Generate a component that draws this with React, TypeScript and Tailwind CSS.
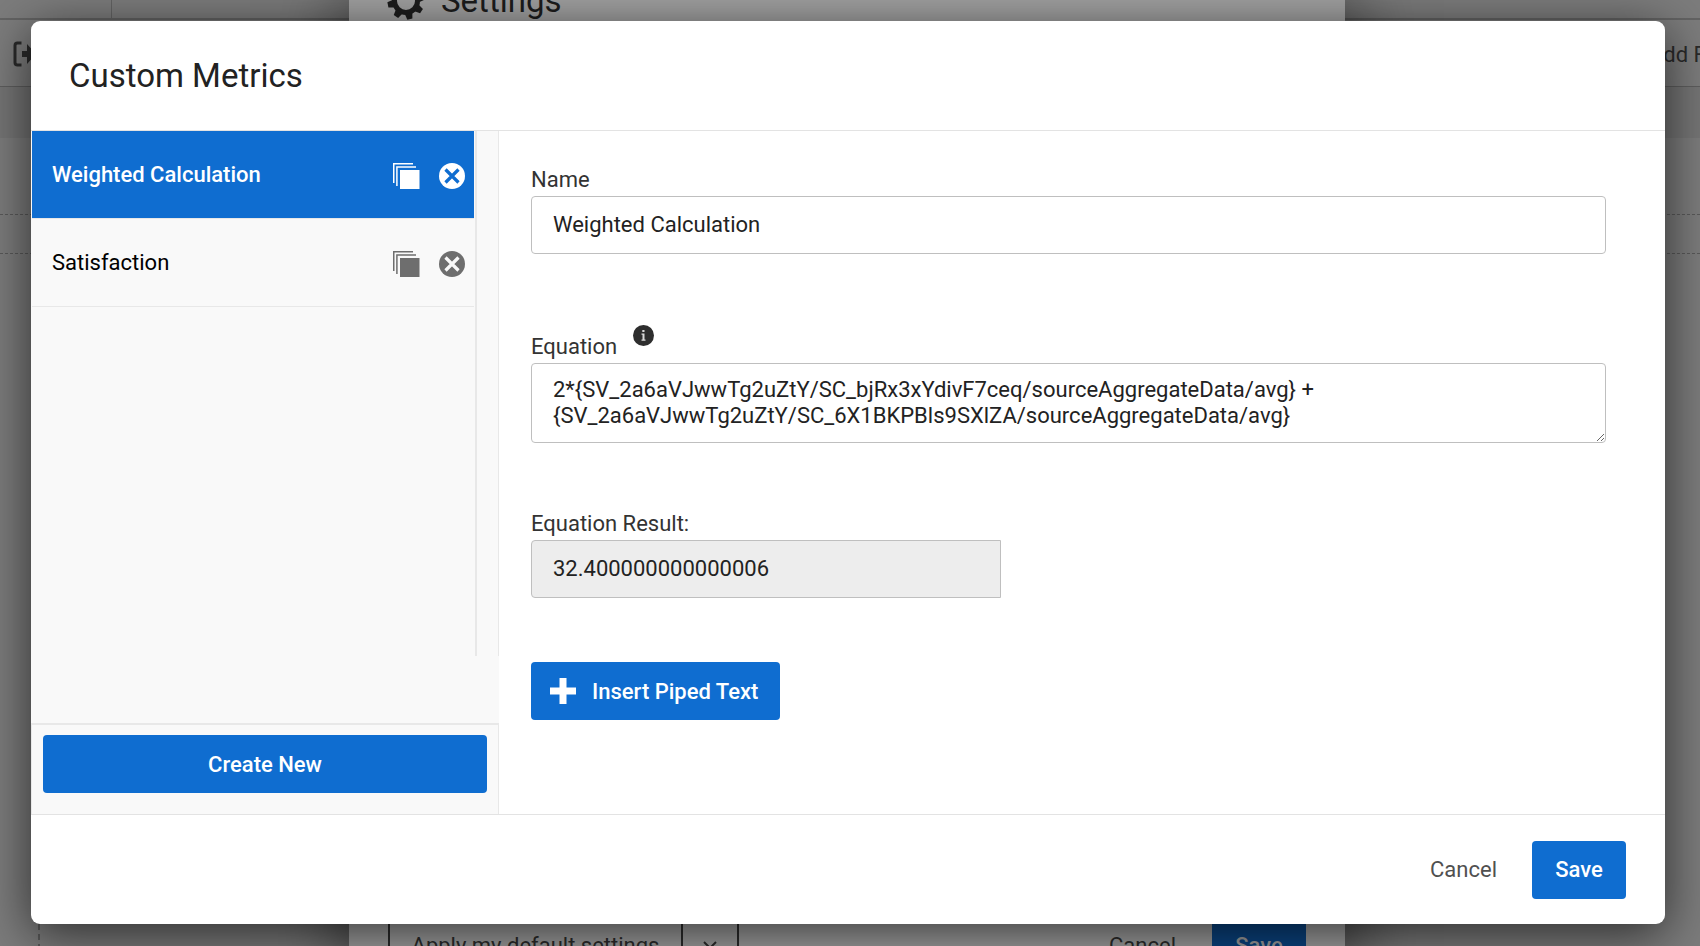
import { useState } from 'react';
import { clsx } from 'clsx';

const METRICS = [
  {
    name: 'Weighted Calculation',
    equation:
      '2*{SV_2a6aVJwwTg2uZtY/SC_bjRx3xYdivF7ceq/sourceAggregateData/avg} +\n{SV_2a6aVJwwTg2uZtY/SC_6X1BKPBls9SXlZA/sourceAggregateData/avg}',
    result: '32.400000000000006'
  },
  {
    name: 'Satisfaction',
    equation: '',
    result: ''
  }
];

const STYLES = {
  primary: 'h-[58px] rounded bg-[#0f6dd0] text-white text-[22px] font-medium',
  label: 'block pb-1 text-[22px] leading-6 text-[#333]',
  field: 'block w-full rounded border border-[#bfbfbf] px-[21px] text-[22px] text-[#222] outline-none'
};

function CopyIcon() {
  return (
    <svg width="27" height="26" viewBox="0 0 27 26" aria-hidden="true">
      <path d="M.75 20V.75H20" fill="none" stroke="currentColor" strokeWidth="1.5" />
      <path d="M3.9 23V3.9H23" fill="none" stroke="currentColor" strokeWidth="1.5" />
      <rect x="7" y="7" width="19.5" height="19" fill="currentColor" />
    </svg>
  );
}

function RemoveIcon({ crossClass }: { crossClass: string }) {
  return (
    <svg width="26" height="26" viewBox="0 0 26 26" aria-hidden="true">
      <circle cx="13" cy="13" r="13" fill="currentColor" />
      <path d="M6.500 6.500l13 13M19.500 6.500l-13 13" fill="none" strokeWidth="3.2" className={crossClass} />
    </svg>
  );
}

function InfoIcon() {
  return (
    <svg width="21" height="21" viewBox="0 0 21 21" aria-hidden="true">
      <circle cx="10.5" cy="10.5" r="10.5" fill="#2e2e2e" />
      <path d="M9.300 5h2.200v2H9.300zM8.500 8.500h3v6h1v1.300h-4v-1.300h1V9.700h-1z" fill="#d8d8d8" />
    </svg>
  );
}

function PlusIcon() {
  return (
    <svg width="26" height="26" viewBox="0 0 26 26" aria-hidden="true">
      <path d="M9.500 0h7v9.500H26v7h-9.500V26h-7v-9.500H0v-7h9.500z" fill="currentColor" />
    </svg>
  );
}

function GearIcon() {
  return (
    <svg width="38" height="38" viewBox="-19 -19 38 38" aria-hidden="true">
      <circle r="11.500" fill="none" stroke="#1c1c1c" strokeWidth="5" />
      {[-12, 33, 78, 123, 168, 213, 258, 303].map((angle) => (
        <path key={angle} d="M-4 12L-2.600 18.500H2.600L4 12z" fill="#1c1c1c" transform={`rotate(${angle})`} />
      ))}
    </svg>
  );
}

// Page and settings dialog that stay visible, dimmed, around the open dialog
function Backdrop() {
  return (
    <div className="absolute inset-0 overflow-hidden bg-[#7c7c7c]" aria-hidden="true">
      <div className="h-5 border-b-2 border-[#636363]">
        <div className="h-full w-28 border-r border-[#636363]" />
      </div>
      <div className="flex h-[67px] items-center justify-between border-b border-[#5e5e5e] pt-0.5">
        <svg className="ml-3" width="28" height="28" viewBox="0 0 28 28">
          <path d="M9.500 3H5.500Q3 3 3 5.500v17Q3 25 5.500 25H9.500" fill="none" stroke="#2a2a2a" strokeWidth="3" />
          <path d="M10 11h5V4l9 10-9 10v-7h-5z" fill="#2a2a2a" />
        </svg>
        <span className="-mr-[93px] w-36 whitespace-nowrap text-[22px] text-[#2a2a2a]">Add Filter</span>
      </div>
      <div className="h-[51px] bg-[#757575]" />
      <div className="h-[77px] border-b border-dashed border-[#595959]" />
      <div className="h-[39px] border-b border-dashed border-[#595959]" />
      <div className="ml-[38px] h-full border-l-2 border-dashed border-[#595959]" />

      <div className="absolute inset-y-0 left-[349px] right-[355px] flex flex-col justify-between bg-[#a0a0a0] shadow-[0_10px_60px_10px_rgba(0,0,0,0.5)]">
        <div className="-mt-[18px] flex items-center gap-4 pl-[38px]">
          <GearIcon />
          <span className="text-[33px] leading-9 text-[#1c1c1c]">Settings</span>
        </div>
        <div className="-mb-7 flex items-center justify-between px-[39px] text-[22px] text-[#2c2c2c]">
          <div className="flex h-[58px] border-2 border-[#2c2c2c]">
            <span className="flex w-[293px] items-center justify-center border-r-2 border-[#2c2c2c]">
              Apply my default settings
            </span>
            <span className="flex w-[54px] items-center justify-center">
              <svg width="14" height="8" viewBox="0 0 14 8">
                <path d="M1 1l6 6 6-6" fill="none" stroke="#2c2c2c" strokeWidth="2" />
              </svg>
            </span>
          </div>
          <div className="flex items-center gap-9">
            <span>Cancel</span>
            <span className="flex h-[58px] w-[94px] items-center justify-center bg-[#0a4482] font-medium text-[#a0a0a0]">
              Save
            </span>
          </div>
        </div>
      </div>
    </div>
  );
}

export default function App() {
  const [selected, setSelected] = useState(0);
  const metric = METRICS[selected];

  return (
    <main className="relative flex min-h-screen flex-col overflow-hidden pt-[21px] pr-[35px] pb-[22px] pl-[31px] font-[Roboto,sans-serif]">
      <Backdrop />

      <section
        role="dialog"
        aria-labelledby="dialog-title"
        className="relative flex flex-1 flex-col overflow-hidden rounded-[9px] bg-white shadow-[0_10px_50px_rgba(0,0,0,0.65)]"
      >
        <header className="flex h-[110px] items-center border-b border-[#e3e3e3] px-[38px]">
          <h1 id="dialog-title" className="text-[33px] text-[#222]">Custom Metrics</h1>
        </header>

        <div className="flex flex-1">
          {/* Metric list */}
          <aside className="flex w-[468px] shrink-0 flex-col bg-[#f9f9f9]">
            <div className="flex h-[525px] border-r border-[#e8e8e8]">
              <ul className="w-[446px] border-r-2 border-[#e8e8e8]">
                {METRICS.map((item, index) => {
                  const active = index === selected;
                  return (
                    <li
                      key={item.name}
                      className={clsx(
                        'mx-px flex h-[88px] items-center border-b border-[#e8e8e8] pr-[9px]',
                        active ? 'bg-[#0f6dd0] text-white' : 'text-[#6e6e6e]'
                      )}
                    >
                      <button
                        type="button"
                        onClick={() => setSelected(index)}
                        className={clsx(
                          'h-full flex-1 pl-5 text-left text-[22px]',
                          active ? 'font-medium text-white' : 'text-black'
                        )}
                      >
                        {item.name}
                      </button>
                      <button type="button" aria-label={`Copy ${item.name}`} className="mr-[19px] pt-[3px]">
                        <CopyIcon />
                      </button>
                      <button type="button" aria-label={`Remove ${item.name}`} className="pt-[3px]">
                        <RemoveIcon crossClass={active ? 'stroke-[#0f6dd0]' : 'stroke-[#f9f9f9]'} />
                      </button>
                    </li>
                  );
                })}
              </ul>
            </div>
            <div className="mt-auto flex h-[91px] items-start border-x border-t-2 border-[#e8e8e8] px-[11px] pt-2.5">
              <button type="button" className={clsx(STYLES.primary, 'w-full')}>
                Create New
              </button>
            </div>
          </aside>

          {/* Metric form */}
          <form className="flex-1 pt-[37px] pr-[59px] pl-8" onSubmit={(event) => event.preventDefault()}>
            <label htmlFor="metric-name" className={STYLES.label}>Name</label>
            <input
              id="metric-name"
              key={`name-${selected}`}
              defaultValue={metric.name}
              className={clsx(STYLES.field, 'h-[58px] pb-0.5')}
            />

            <div className="mt-[71px] flex items-start gap-4">
              <label htmlFor="metric-equation" className={clsx(STYLES.label, 'pt-2.5')}>Equation</label>
              <button type="button" aria-label="About equations">
                <InfoIcon />
              </button>
            </div>
            <textarea
              id="metric-equation"
              key={`equation-${selected}`}
              defaultValue={metric.equation}
              spellCheck={false}
              className={clsx(STYLES.field, 'h-20 overflow-hidden py-[13px] leading-[26px]')}
            />

            <label htmlFor="metric-result" className={clsx(STYLES.label, 'mt-[69px]')}>Equation Result:</label>
            <input
              id="metric-result"
              readOnly
              value={metric.result}
              className={clsx(STYLES.field, 'h-[58px] max-w-[470px] rounded-r-none bg-[#ededed] pb-0.5')}
            />

            <button
              type="button"
              className={clsx(STYLES.primary, 'mt-16 flex items-center gap-4 pr-[22px] pl-[19px]')}
            >
              <PlusIcon />
              Insert Piped Text
            </button>
          </form>
        </div>

        <footer className="flex h-[110px] items-center justify-end gap-[35px] border-t border-[#e3e3e3] pr-[39px]">
          <button type="button" className="text-[22px] text-[#505050]">Cancel</button>
          <button type="button" className={clsx(STYLES.primary, 'w-[94px]')}>Save</button>
        </footer>
      </section>
    </main>
  );
}
